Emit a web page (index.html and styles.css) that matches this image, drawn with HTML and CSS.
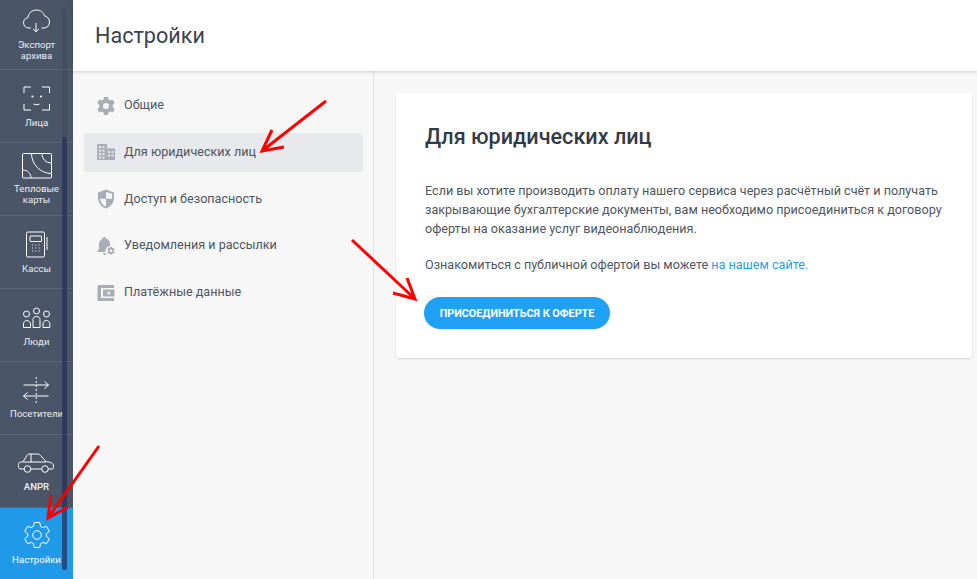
FILE: index.html
```html
<!DOCTYPE html>
<html lang="ru">
<head>
<meta charset="utf-8">
<title>Настройки</title>
<link rel="stylesheet" href="styles.css">
</head>
<body>
<div class="app">
  <nav class="side">
    <div class="side-list">
      <a class="side-item side-item-export">
        <svg class="side-icon" viewBox="0 0 30 30"><path d="M9 22H6.500C3.500 22 1.500 19.500 1.500 16.700C1.500 14 3.500 12 6 11.500C6.500 7 10 4 14.500 4C18.500 4 21.500 6.500 22.500 10C25.500 10.500 27.500 13 27.500 16C27.500 19.500 25 22 22 22H19.500"/><path d="M14 17V25.500M11 22.800L14 25.700L17 22.800"/></svg>
        <span>Экспорт<br>архива</span>
      </a>
      <a class="side-item side-item-face">
        <svg class="side-icon" viewBox="0 0 30 30"><path d="M2 9V3H9M20 3H27.500V9M27.500 20V26H20M9 26H2V20"/><path d="M11.500 20C13.500 21 15.500 21 17.500 20"/><circle class="dot" cx="10.500" cy="12.500" r="1.100"/><circle class="dot" cx="19" cy="12.500" r="1.100"/></svg>
        <span>Лица</span>
      </a>
      <a class="side-item side-item-heat">
        <svg class="side-icon" viewBox="0 0 30 30"><rect x=".5" y="2.500" width="29" height="24.500" rx="1"/><path d="M9.500 2.500C9.500 13 18 22.500 29.500 22.500M20 2.500C20 8 24 12 29.500 12M.5 19C5.500 19 9 22.500 9 27"/></svg>
        <span>Тепловые<br>карты</span>
      </a>
      <a class="side-item side-item-cash">
        <svg class="side-icon" viewBox="0 0 30 30"><rect x="4.500" y="4" width="18" height="25" rx="1.500"/><rect x="8" y="8" width="11.500" height="5.500" rx=".5"/><path d="M25 9V22"/><path class="keys" d="M10 17h1.500M13.300 17h1.500M16.600 17h1.500M10 20h1.500M13.300 20h1.500M16.600 20h1.500M10 23h1.500M13.300 23h1.500M16.600 23h1.500"/></svg>
        <span>Кассы</span>
      </a>
      <a class="side-item side-item-people">
        <svg class="side-icon" viewBox="0 0 30 30"><circle cx="4.500" cy="10" r="3"/><circle cx="14.500" cy="7" r="3"/><circle cx="24.500" cy="10" r="3"/><path d="M1.500 23.500V20C1.500 18 2.800 16.500 4.800 16.500C6.800 16.500 8.500 18 8.500 20V23.500ZM11 23.500V15.500C11 13.700 12.500 12.500 14.500 12.500C16.500 12.500 18 13.700 18 15.500V23.500ZM21 23.500V20C21 18 22.300 16.500 24.300 16.500C26.300 16.500 27.800 18 27.800 20V23.500Z"/></svg>
        <span>Люди</span>
      </a>
      <a class="side-item">
        <svg class="side-icon" viewBox="0 0 30 30"><path d="M1.500 12H26.500M22.500 8.500L26.500 12L22.500 15.500M26.500 23H1.500M5.500 19.500L1.500 23L5.500 26.500"/><path class="dash" d="M14.200 4V30"/></svg>
        <span>Посетители</span>
      </a>
      <a class="side-item">
        <svg class="side-icon side-icon-car" viewBox="0 0 38 30"><path d="M6 23H3C1.500 23 .5 22 .5 20.500V18.500C.5 17 1.500 16 3 16L5 15.700L9 9.500C9.500 8.500 10.500 8 12 8H19C20.500 8 21.500 8.500 22.500 9.500L28 15.500C32 16 35.500 17 35.500 20V21.500C35.500 22.500 35 23 34 23H30.500M13 23H23.500M5 16H28M13 8V16"/><circle cx="9.500" cy="23" r="3.300"/><circle cx="27" cy="23" r="3.300"/></svg>
        <span class="latin">ANPR</span>
      </a>
      <a class="side-item side-item-gear is-active">
        <svg class="side-icon" viewBox="0 0 30 30"><path d="M12.200 2.500H17.800L18.500 6.300L20.800 7.600L24.500 6.300L27.300 11.200L24.300 13.700V16.300L27.300 18.800L24.500 23.700L20.800 22.400L18.500 23.700L17.800 27.500H12.200L11.500 23.700L9.200 22.400L5.500 23.700L2.700 18.800L5.700 16.300V13.700L2.700 11.200L5.500 6.300L9.200 7.600L11.500 6.300Z"/><circle cx="15" cy="15" r="4.300"/></svg>
        <span>Настройки</span>
      </a>
    </div>
    <div class="scrollbar"><div class="scrollbar-thumb"></div></div>
  </nav>
  <div class="main">
    <header class="top"><h1>Настройки</h1></header>
    <div class="body">
      <aside class="menu">
        <a class="menu-item">
          <svg class="menu-icon" viewBox="0 0 20 20"><path fill-rule="evenodd" d="M8 1H12L12.500 3.500L14.300 4.400L16.700 3.500L18.700 7L16.800 8.700V11.300L18.700 13L16.700 16.500L14.300 15.600L12.500 16.500L12 19H8L7.500 16.500L5.700 15.600L3.300 16.500L1.300 13L3.200 11.300V8.700L1.300 7L3.300 3.500L5.700 4.400L7.500 3.500ZM10 7A3 3 0 1 0 10 13A3 3 0 1 0 10 7Z"/></svg>
          <span>Общие</span>
        </a>
        <a class="menu-item is-active">
          <svg class="menu-icon" viewBox="0 0 20 20"><path fill-rule="evenodd" d="M1 2H11V6.500H19V18H1ZM3 4V6H5V4ZM6.500 4V6H8.500V4ZM3 7.500V9.500H5V7.500ZM6.500 7.500V9.500H8.500V7.500ZM3 11V13H5V11ZM6.500 11V13H8.500V11ZM3 14.500V16.500H5V14.500ZM6.500 14.500V16.500H8.500V14.500ZM12 9V11H14V9ZM15.500 9V11H17.500V9ZM12 12.500V14.500H14V12.500ZM15.500 12.500V14.500H17.500V12.500Z"/></svg>
          <span>Для юридических лиц</span>
        </a>
        <a class="menu-item">
          <svg class="menu-icon" viewBox="0 0 20 20"><path fill-rule="evenodd" d="M10 .5L18 3.500V9C18 14 14.500 18 10 19.500C5.500 18 2 14 2 9V3.500ZM10 3V9.800H16C16 9.500 16.100 9.200 16.100 9V4.800ZM10 9.800H3.900C4.400 13.200 6.800 16.300 10 17.500Z"/></svg>
          <span>Доступ и безопасность</span>
        </a>
        <a class="menu-item">
          <svg class="menu-icon" viewBox="0 0 20 20"><path d="M8.500 1C9.500 1 10 1.700 10 2.500C12.500 3.200 14 5 14 8V10.200A5 5 0 0 0 9.500 16H1.500V14.800L3 13V8C3 5 4.500 3.200 7 2.500C7 1.700 7.500 1 8.500 1ZM7 17H10C9.800 18.200 9.300 19 8.500 19C7.700 19 7.200 18.200 7 17Z"/><path fill-rule="evenodd" d="M14 11H16L16.300 12.300L17.500 11.800L18.700 13.400L17.700 14.300V15.300L18.700 16.200L17.500 17.800L16.300 17.300L16 18.600H14L13.700 17.300L12.500 17.800L11.300 16.200L12.300 15.300V14.300L11.300 13.400L12.500 11.800L13.700 12.300ZM15 13.500A1.300 1.300 0 1 0 15 16.100A1.300 1.300 0 1 0 15 13.500Z"/></svg>
          <span>Уведомления и рассылки</span>
        </a>
        <a class="menu-item">
          <svg class="menu-icon" viewBox="0 0 20 20"><path fill-rule="evenodd" d="M3 2H18V5H5V15H18V18H3C2 18 1.500 17.500 1.500 16.500V3.500C1.500 2.500 2 2 3 2ZM7 6.500H18.500V13.500H7ZM11.500 8.800V11.200H14V8.800Z"/></svg>
          <span>Платёжные данные</span>
        </a>
      </aside>
      <section class="content">
        <article class="card">
          <h2>Для юридических лиц</h2>
          <p>Если вы хотите производить оплату нашего сервиса через расчётный счёт и получать закрывающие бухгалтерские документы, вам необходимо присоединиться к договору оферты на оказание услуг видеонаблюдения.</p>
          <p class="second">Ознакомиться с публичной офертой вы можете <a class="link">на нашем сайте.</a></p>
          <button class="btn" type="button">Присоединиться к оферте</button>
        </article>
      </section>
    </div>
  </div>
  <svg class="arrows" viewBox="0 0 977 579">
    <path d="M326 101L262 151M272 130L262 151L284 147"/>
    <path d="M352 240L415 299M407 278L415 299L393 293"/>
    <path d="M99 446L48 518M51 495L48 518L68 507"/>
  </svg>
</div>
</body>
</html>
```

FILE: styles.css
```css
* { box-sizing: border-box; }
html, body { margin: 0; height: 100%; }
body { font-family: Roboto, "Liberation Sans", sans-serif; background: #f7f7f7; overflow: hidden; }
.app { position: relative; display: flex; width: 977px; height: 579px; overflow: hidden; }

.side { position: relative; flex: 0 0 73px; background: #4a5568; overflow: hidden; }
.side-list { display: flex; flex-direction: column; margin-top: -2px; }
.side-item { display: flex; flex-direction: column; align-items: center; height: 73px; padding-top: 11px; border-bottom: 1px solid #5a6678; color: #eceef1; font-size: 9.600px; line-height: 11px; text-align: center; white-space: nowrap; }
.side-item span { display: block; }
.side-icon { flex: none; width: 30px; height: 30px; margin-bottom: 5px; fill: none; stroke: #fff; stroke-width: 1; }
.side-icon-car { width: 38px; }
.side-icon .dot { fill: #fff; stroke: none; }
.side-icon .dash { stroke-dasharray: 2 2; }
.side-icon .keys { stroke-width: 1.200; stroke-dasharray: 1 .6; }
.side-item-export { height: 72px; padding-top: 8px; }
.side-item-export .side-icon { margin-bottom: 3px; }
.side-item-face { padding-top: 14px; }
.side-item-face .side-icon { margin-bottom: 3px; }
.side-item-heat { padding-top: 8px; }
.side-item-heat .side-icon { margin-bottom: 2px; }
.side-item-cash { padding-top: 12px; }
.side-item-people { padding-top: 15px; }
.side-item-people .side-icon { margin-bottom: 2px; }
.side-item-gear { padding-top: 12px; }
.side-item-gear .side-icon { margin-bottom: 4px; }
.latin { font-weight: 500; }
.side-item.is-active { height: 74px; background: #1f99e8; border-bottom: 0; color: #fff; }
.scrollbar { position: absolute; top: 8px; bottom: 9px; left: 62px; width: 5px; border-radius: 3px; background: rgba(50, 60, 85, .25); }
.scrollbar-thumb { position: absolute; top: 129px; bottom: 0; left: 0; right: 0; border-radius: 3px; background: rgba(35, 45, 85, .6); }

.main { flex: 1; display: flex; flex-direction: column; min-width: 0; }
.top { position: relative; z-index: 1; flex: 0 0 71px; display: flex; align-items: center; padding-left: 22px; background: #fff; box-shadow: 0 1px 3px rgba(0, 0, 0, .16); }
.top h1 { margin: 0; color: #3b4250; font-size: 21.600px; font-weight: 400; }

.body { flex: 1; display: flex; min-height: 0; }
.menu { flex: 0 0 301px; display: flex; flex-direction: column; gap: 7.800px; padding: 15px 10px 0 11px; border-right: 1px solid #dfe0e2; }
.menu-item { display: flex; align-items: center; gap: 8px; height: 39px; padding-left: 12px; border-radius: 3px; color: #4e5561; font-size: 12.600px; }
.menu-item span { position: relative; top: -1px; }
.menu-item.is-active { background: #e8e9ec; }
.menu-icon { flex: none; width: 20px; height: 20px; fill: #a9aeb6; }

.content { flex: 1; padding: 22px 5px 0 22px; }
.card { height: 265px; padding: 29px 28px 0 29px; border-radius: 3px; background: #fff; box-shadow: 0 1px 2px rgba(0, 0, 0, .14); }
.card h2 { margin: 0 0 29px; color: #333a47; font-size: 21.600px; font-weight: 500; line-height: 30px; }
.card p { margin: 0; color: #4e5561; font-size: 12.600px; line-height: 19px; }
.card .second { margin-top: 17px; }
.link { color: #1f9fea; }
.btn { display: block; width: 186px; height: 32px; margin: 23px 0 0 -1px; padding: 0; border: 0; border-radius: 16px; background: #1fa2f5; color: #fff; font: 700 10.800px Roboto, "Liberation Sans", sans-serif; text-transform: uppercase; }

.arrows { position: absolute; inset: 0; width: 977px; height: 579px; fill: none; stroke: #f00; stroke-width: 3; pointer-events: none; }
```
